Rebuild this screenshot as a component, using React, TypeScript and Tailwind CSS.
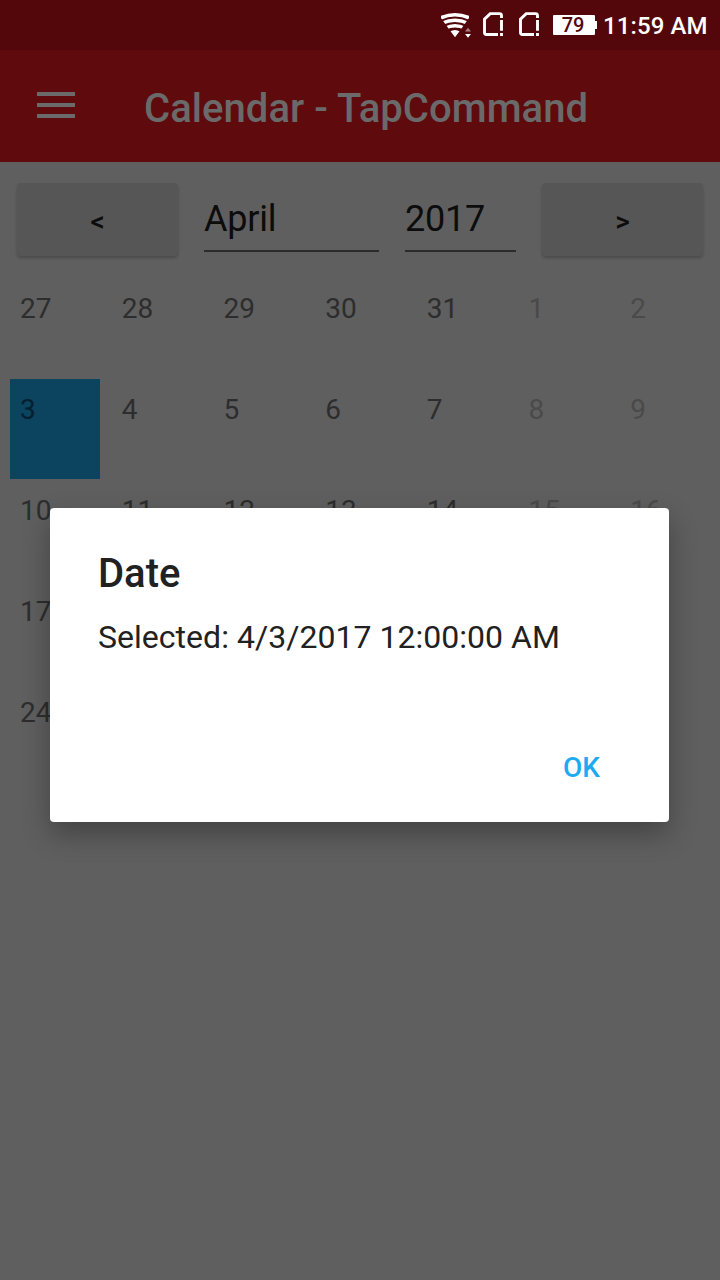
const weeks: number[][] = [
  [27, 28, 29, 30, 31, 1, 2],
  [3, 4, 5, 6, 7, 8, 9],
  [10, 11, 12, 13, 14, 15, 16],
  [17, 18, 19, 20, 21, 22, 23],
  [24, 25, 26, 27, 28, 29, 30],
];

function WifiIcon() {
  return (
    <svg width="32" height="28" viewBox="0 0 32 28" className="shrink-0">
      <defs>
        <clipPath id="wifi-fan">
          <path d="M1 7 L15 26.6 L29 7 V-4 H1Z" />
        </clipPath>
      </defs>
      <g clipPath="url(#wifi-fan)" fill="none" stroke="#fff" strokeWidth="3.5">
        <path d="M0 7.2 Q15 0.2 30 7.2" />
        <path d="M2 12.3 Q15 6 28 12.3" />
        <path d="M5 17.3 Q15 12.4 25 17.3" />
        <path d="M10 20.6 Q15 17.6 20 20.6 L15 26.6Z" fill="#fff" stroke="none" />
      </g>
      <path d="M25 20.4 L28 16.8 L31 20.4Z" fill="#a98083" />
      <path d="M25 23 H31 L28 26.8Z" fill="#fff" />
    </svg>
  );
}

function SimIcon() {
  return (
    <svg width="22" height="26" viewBox="0 0 22 26" className="shrink-0" fill="none" stroke="#fff" strokeWidth="2.9">
      <path d="M16 23.5 H4.5 Q2.5 23.5 2.5 21.5 V8.2 L8.2 2.6 H17.5 Q19.5 2.6 19.5 4.6 V7" />
      <path d="M19.5 9 V19.8 M19.5 22 V25" />
    </svg>
  );
}

function StatusBar() {
  return (
    <header className="flex h-[50px] items-start bg-[#53070a] pl-[440px] text-white">
      <div className="pt-[11px]"><WifiIcon /></div>
      <div className="pt-[11px] pl-[10px]"><SimIcon /></div>
      <div className="pt-[11px] pl-[14px]"><SimIcon /></div>
      <div className="flex items-center pt-[15px] pl-[13px]">
        <div className="flex h-5 w-[42px] items-center justify-center rounded-[1px] bg-white pr-[2px] text-[20px] leading-5 font-medium text-[#53070a]">79</div>
        <div className="h-2 w-[2px] bg-white" />
      </div>
      <span className="pt-[11px] pl-[6px] text-[24px] leading-[31px] font-medium tracking-[0.12px] whitespace-nowrap">11:59 AM</span>
    </header>
  );
}

function StepButton({ label }: { label: string }) {
  return (
    <button className="mt-[13px] h-[73px] w-[161px] rounded-[4px] bg-[#565656] pt-[3px] text-[28px] leading-[33px] font-medium text-[#0c0c0c] shadow-[0_2px_3px_rgba(0,0,0,0.22)]">
      {label}
    </button>
  );
}

function Dialog() {
  return (
    <section
      role="dialog"
      className="absolute top-[508px] left-[50px] flex h-[314px] w-[619px] flex-col rounded-[4px] bg-white px-12 pt-[42px] text-[#212121] shadow-[0_12px_28px_rgba(0,0,0,0.3)]"
    >
      <h2 className="text-[40px] leading-[47px] font-medium">Date</h2>
      <p className="pt-[21px] text-[32px] leading-[38px] tracking-[0.03px] whitespace-nowrap">Selected: 4/3/2017 12:00:00 AM</p>
      <button className="mt-[95px] mr-[21px] self-end text-[28px] leading-[33px] font-medium text-[#1eaaf1]">OK</button>
    </section>
  );
}

export default function App() {
  return (
    <div className="relative flex h-[1280px] w-[720px] flex-col overflow-hidden bg-[#5f5f5f] font-['Roboto',sans-serif]">
      <StatusBar />
      <nav className="flex h-28 items-start bg-[#5f0b0e] pl-[37px] text-[#6a6a6a]">
        <div className="flex w-[38px] flex-col gap-[7px] pt-[42px]">
          <div className="h-1 bg-[#6a6a6a]" />
          <div className="h-1 bg-[#6a6a6a]" />
          <div className="h-1 bg-[#6a6a6a]" />
        </div>
        <h1 className="pt-[35px] pl-[69px] text-[40px] leading-[47px] font-medium tracking-[0.05px] whitespace-nowrap">Calendar - TapCommand</h1>
      </nav>
      <div className="flex h-[116px] items-start pt-[8px] pl-[17px] text-[36px] leading-[42px] tracking-[-0.2px] text-[#0c0c0c]">
        <StepButton label="<" />
        <div className="ml-[26px] h-[82px] w-[175px] border-b-2 border-[#2b2b2b] pt-[28px]">April</div>
        <div className="mr-[26px] ml-[26px] h-[82px] w-[111px] border-b-2 border-[#2b2b2b] pt-[28px]">2017</div>
        <StepButton label=">" />
      </div>
      <main className="grid w-[722px] auto-rows-[101px] grid-cols-7 pl-[10px]">
        {weeks.map((week, row) =>
          week.map((day, col) => (
            <div
              key={`${row}-${col}`}
              className={`h-[100px] w-[90px] pt-[14px] pl-[10px] text-[28px] leading-[33px] ${
                row === 1 && col === 0 ? "bg-[#0c435f] text-[#04202f]" : col > 4 ? "text-[#4a4a4a]" : "text-[#2d2d2d]"
              } ${row > 2 && col > 0 ? "invisible" : ""}`}
            >
              {day}
            </div>
          )),
        )}
      </main>
      <Dialog />
    </div>
  );
}
